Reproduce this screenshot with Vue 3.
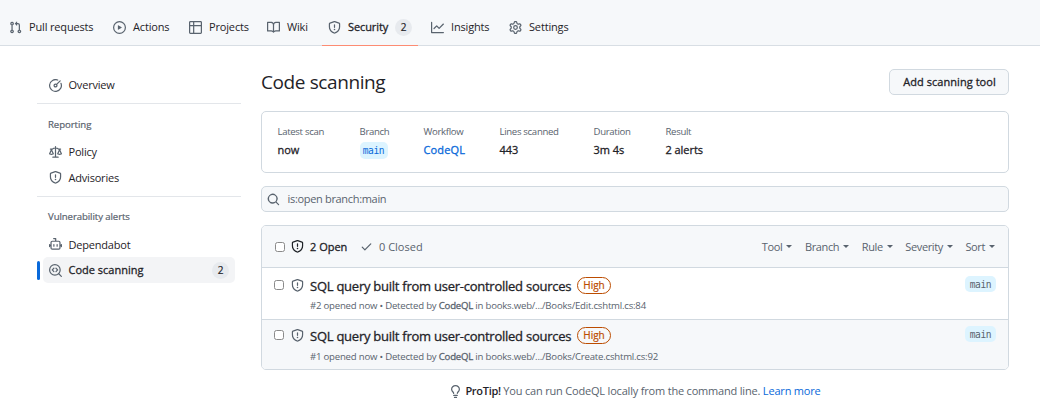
<script setup>
const icons = {
  pr: 'M1.5 3.25a2.25 2.25 0 1 1 3 2.122v5.256a2.251 2.251 0 1 1-1.5 0V5.372A2.25 2.25 0 0 1 1.5 3.25Zm5.677-.177L9.573.677A.25.25 0 0 1 10 .854V2.5h1A2.5 2.5 0 0 1 13.5 5v5.628a2.251 2.251 0 1 1-1.5 0V5a1 1 0 0 0-1-1h-1v1.646a.25.25 0 0 1-.427.177L7.177 3.427a.25.25 0 0 1 0-.354ZM3.75 2.5a.75.75 0 1 0 0 1.5.75.75 0 0 0 0-1.5Zm0 9.5a.75.75 0 1 0 0 1.5.75.75 0 0 0 0-1.5Zm8.25.75a.75.75 0 1 0 1.5 0 .75.75 0 0 0-1.5 0Z',
  play: 'M8 0a8 8 0 1 1 0 16A8 8 0 0 1 8 0ZM1.5 8a6.5 6.5 0 1 0 13 0 6.5 6.5 0 0 0-13 0Zm4.879-2.773 4.264 2.559a.25.25 0 0 1 0 .428l-4.264 2.559A.25.25 0 0 1 6 10.559V5.442a.25.25 0 0 1 .379-.215Z',
  table: 'M0 1.75C0 .784.784 0 1.75 0h12.5C15.216 0 16 .784 16 1.75v12.5A1.75 1.75 0 0 1 14.25 16H1.75A1.75 1.75 0 0 1 0 14.25ZM6.5 6.5v8h7.75a.25.25 0 0 0 .25-.25V6.5Zm8-1.5V1.75a.25.25 0 0 0-.25-.25H6.5V5Zm-13 1.5v7.75c0 .138.112.25.25.25H5v-8ZM5 5V1.5H1.75a.25.25 0 0 0-.25.25V5Z',
  book: 'M0 1.75A.75.75 0 0 1 .75 1h4.253c1.227 0 2.317.59 3 1.501A3.743 3.743 0 0 1 11.006 1h4.245a.75.75 0 0 1 .75.75v10.5a.75.75 0 0 1-.75.75h-4.507a2.25 2.25 0 0 0-1.591.659l-.622.621a.75.75 0 0 1-1.06 0l-.622-.621A2.25 2.25 0 0 0 5.258 13H.75a.75.75 0 0 1-.75-.75Zm7.251 10.324.004-5.073-.002-2.253A2.25 2.25 0 0 0 5.003 2.5H1.5v9h3.757a3.75 3.75 0 0 1 1.994.574ZM8.755 4.75l-.004 7.322a3.752 3.752 0 0 1 1.992-.572H14.5v-9h-3.495a2.25 2.25 0 0 0-2.25 2.25Z',
  shield: 'M7.467.133a1.748 1.748 0 0 1 1.066 0l5.25 1.68A1.75 1.75 0 0 1 15 3.48V7c0 1.566-.32 3.182-1.303 4.682-.983 1.498-2.585 2.813-5.032 3.855a1.697 1.697 0 0 1-1.33 0c-2.447-1.042-4.049-2.357-5.032-3.855C1.32 10.182 1 8.566 1 7V3.48a1.75 1.75 0 0 1 1.217-1.667Zm.61 1.429a.25.25 0 0 0-.153 0l-5.25 1.68a.25.25 0 0 0-.174.238V7c0 1.358.275 2.666 1.057 3.86.784 1.194 2.121 2.34 4.366 3.297a.196.196 0 0 0 .154 0c2.245-.956 3.582-2.104 4.366-3.298C13.225 9.666 13.5 8.36 13.5 7V3.48a.251.251 0 0 0-.174-.237l-5.25-1.68ZM8.75 4.75v3a.75.75 0 0 1-1.5 0v-3a.75.75 0 0 1 1.5 0ZM9 10.5a1 1 0 1 1-2 0 1 1 0 0 1 2 0Z',
  graph: 'M1.5 1.75V13.5h13.75a.75.75 0 0 1 0 1.5H.75a.75.75 0 0 1-.75-.75V1.75a.75.75 0 0 1 1.5 0Zm14.28 2.53-5.25 5.25a.75.75 0 0 1-1.06 0L7 7.06 4.28 9.78a.751.751 0 0 1-1.042-.018.751.751 0 0 1-.018-1.042l3.25-3.25a.75.75 0 0 1 1.06 0L10 7.94l4.72-4.72a.751.751 0 0 1 1.042.018.751.751 0 0 1 .018 1.042Z',
  gear: 'M8 0a8.2 8.2 0 0 1 .701.031C9.444.095 9.99.645 10.16 1.29l.288 1.107c.018.066.079.158.212.224.231.114.454.243.668.386.123.082.233.09.299.071l1.103-.303c.644-.176 1.392.021 1.82.63.27.385.506.792.704 1.218.315.675.111 1.422-.364 1.891l-.814.806c-.049.048-.098.147-.088.294.016.257.016.515 0 .772-.01.147.038.246.088.294l.814.806c.475.469.679 1.216.364 1.891a7.977 7.977 0 0 1-.704 1.217c-.428.61-1.176.807-1.82.63l-1.102-.302c-.067-.019-.177-.011-.3.071a5.909 5.909 0 0 1-.668.386c-.133.066-.194.158-.211.224l-.29 1.106c-.168.646-.715 1.196-1.458 1.26a8.006 8.006 0 0 1-1.402 0c-.743-.064-1.289-.614-1.458-1.26l-.289-1.106c-.018-.066-.079-.158-.212-.224a5.738 5.738 0 0 1-.668-.386c-.123-.082-.233-.09-.299-.071l-1.103.303c-.644.176-1.392-.021-1.82-.63a8.12 8.12 0 0 1-.704-1.218c-.315-.675-.111-1.422.363-1.891l.815-.806c.05-.048.098-.147.088-.294a6.214 6.214 0 0 1 0-.772c.01-.147-.038-.246-.088-.294l-.815-.806C.635 6.045.431 5.298.746 4.623a7.92 7.92 0 0 1 .704-1.217c.428-.61 1.176-.807 1.82-.63l1.102.302c.067.019.177.011.3-.071.214-.143.437-.272.668-.386.133-.066.194-.158.211-.224l.29-1.106C6.009.645 6.556.095 7.299.03 7.53.01 7.764 0 8 0Zm-.571 1.525c-.036.003-.108.036-.137.146l-.289 1.105c-.147.561-.549.967-.998 1.189-.173.086-.34.183-.5.29-.417.278-.97.423-1.529.27l-1.103-.303c-.109-.03-.175.016-.195.045-.22.312-.412.644-.573.99-.014.031-.021.11.059.19l.815.806c.411.406.562.957.53 1.456a4.709 4.709 0 0 0 0 .582c.032.499-.119 1.05-.53 1.456l-.815.806c-.081.08-.073.159-.059.19.162.346.353.677.573.989.02.03.085.076.195.046l1.102-.303c.56-.153 1.113-.008 1.53.27.161.107.328.204.501.29.447.222.85.629.997 1.189l.289 1.105c.029.109.101.143.137.146a6.6 6.6 0 0 0 1.142 0c.036-.003.108-.036.137-.146l.289-1.105c.147-.561.549-.967.998-1.189.173-.086.34-.183.5-.29.417-.278.97-.423 1.529-.27l1.103.303c.109.029.175-.016.195-.045.22-.313.411-.644.573-.99.014-.031.021-.11-.059-.19l-.815-.806c-.411-.406-.562-.957-.53-1.456a4.709 4.709 0 0 0 0-.582c-.032-.499.119-1.05.53-1.456l.815-.806c.081-.08.073-.159.059-.19a6.464 6.464 0 0 0-.573-.989c-.02-.03-.085-.076-.195-.046l-1.102.303c-.56.153-1.113.008-1.53-.27a4.44 4.44 0 0 0-.501-.29c-.447-.222-.85-.629-.997-1.189l-.289-1.105c-.029-.11-.101-.143-.137-.146a6.6 6.6 0 0 0-1.142 0ZM11 8a3 3 0 1 1-6 0 3 3 0 0 1 6 0ZM9.5 8a1.5 1.5 0 1 0-3.001.001A1.5 1.5 0 0 0 9.5 8Z',
  meter: 'M8 1.5a6.5 6.5 0 1 0 6.016 4.035.75.75 0 0 1 1.388-.57 8 8 0 1 1-4.37-4.37.75.75 0 0 1-.569 1.389A6.473 6.473 0 0 0 8 1.5Zm6.28.22a.75.75 0 0 1 0 1.06l-4.063 4.064a2.5 2.5 0 1 1-1.06-1.06L13.22 1.72a.75.75 0 0 1 1.06 0ZM7 8a1 1 0 1 0 2 0 1 1 0 0 0-2 0Z',
  law: 'M8.75.75V2h.985c.304 0 .603.08.867.231l1.29.736c.038.022.08.033.124.033h2.234a.75.75 0 0 1 0 1.5h-.427l2.111 4.692a.75.75 0 0 1-.154.838c-.21.2-.5.4-.748.5C14.556 10.78 13.88 11 13 11a4.498 4.498 0 0 1-2.023-.454 3.544 3.544 0 0 1-.757-.516.75.75 0 0 1-.154-.838L12.178 4.5h-.162c-.305 0-.604-.079-.868-.231l-1.29-.736a.245.245 0 0 0-.124-.033H8.75V13h2.5a.75.75 0 0 1 0 1.5h-6.5a.75.75 0 0 1 0-1.5h2.5V3.5h-.984a.245.245 0 0 0-.124.033l-1.289.737c-.265.15-.564.23-.869.23h-.162l2.112 4.692a.75.75 0 0 1-.154.838c-.21.2-.5.4-.757.516C4.556 10.78 3.88 11 3 11a4.498 4.498 0 0 1-2.023-.454 3.544 3.544 0 0 1-.757-.516.75.75 0 0 1-.154-.838L2.178 4.5H1.75a.75.75 0 0 1 0-1.5h2.234a.249.249 0 0 0 .125-.033l1.288-.737c.265-.15.564-.23.869-.23h.984V.75a.75.75 0 0 1 1.5 0Zm2.945 8.477c.285.135.718.273 1.305.273s1.02-.138 1.305-.273L13 6.327Zm-10 0c.285.135.718.273 1.305.273s1.02-.138 1.305-.273L3 6.327Z',
  search: 'M10.68 11.74a6 6 0 0 1-7.922-8.982 6 6 0 0 1 8.982 7.922l3.04 3.04a.749.749 0 0 1-.326 1.275.749.749 0 0 1-.734-.215ZM11.5 7a4.499 4.499 0 1 0-8.997 0A4.499 4.499 0 0 0 11.5 7Z',
  check: 'M13.78 4.22a.75.75 0 0 1 0 1.06l-7.25 7.25a.75.75 0 0 1-1.06 0L2.22 9.28a.751.751 0 0 1 .018-1.042.751.751 0 0 1 1.042-.018L6 10.94l6.72-6.72a.75.75 0 0 1 1.06 0Z',
  bulb: 'M8 1.5c-2.363 0-4 1.69-4 3.75 0 .984.424 1.625.984 2.304l.214.253c.223.264.47.556.673.848.284.411.537.896.621 1.49a.75.75 0 0 1-1.484.211c-.04-.282-.163-.547-.37-.847a8.456 8.456 0 0 0-.542-.68c-.084-.1-.173-.205-.268-.32C3.201 7.75 2.5 6.766 2.5 5.25 2.5 2.31 4.863 0 8 0s5.5 2.31 5.5 5.25c0 1.516-.701 2.5-1.328 3.259-.095.115-.184.22-.268.319-.207.245-.383.453-.541.681-.208.3-.33.565-.37.847a.751.751 0 0 1-1.485-.212c.084-.593.337-1.078.621-1.489.203-.292.45-.584.673-.848.075-.088.147-.173.213-.253.561-.679.985-1.32.985-2.304 0-2.06-1.637-3.75-4-3.75ZM5.75 12h4.5a.75.75 0 0 1 0 1.5h-4.5a.75.75 0 0 1 0-1.5ZM6 15.25a.75.75 0 0 1 .75-.75h2.5a.75.75 0 0 1 0 1.5h-2.5a.75.75 0 0 1-.75-.75Z'
}
const tabs = [
  { id: 'pulls', icon: 'pr', label: 'Pull requests' },
  { id: 'actions', icon: 'play', label: 'Actions' },
  { id: 'projects', icon: 'table', label: 'Projects' },
  { id: 'wiki', icon: 'book', label: 'Wiki' },
  { id: 'security', icon: 'shield', label: 'Security', count: 2 },
  { id: 'insights', icon: 'graph', label: 'Insights' },
  { id: 'settings', icon: 'gear', label: 'Settings' }
]
const filters = ['Tool', 'Branch', 'Rule', 'Severity', 'Sort']
const alerts = [
  { n: 2, path: 'books.web/.../Books/Edit.cshtml.cs:84' },
  { n: 1, path: 'books.web/.../Books/Create.cshtml.cs:92' }
]
</script>

<template>
  <div class="page">
    <nav class="tabs">
      <a v-for="t in tabs" :key="t.id" class="tab" :class="t.id">
        <svg class="icon" viewBox="0 0 16 16"><path :d="icons[t.icon]" /></svg>
        <span class="label">{{ t.label }}</span>
        <span v-if="t.count" class="count">{{ t.count }}</span>
      </a>
    </nav>

    <div class="body">
      <aside class="side">
        <a class="item"><svg class="icon" viewBox="0 0 16 16"><path :d="icons.meter" /></svg><span>Overview</span></a>
        <hr class="divider first" />
        <h3 class="group">Reporting</h3>
        <a class="item"><svg class="icon" viewBox="0 0 16 16"><path :d="icons.law" /></svg><span>Policy</span></a>
        <a class="item adv"><svg class="icon" viewBox="0 0 16 16"><path :d="icons.shield" /></svg><span>Advisories</span></a>
        <hr class="divider second" />
        <h3 class="group vuln">Vulnerability alerts</h3>
        <a class="item bot">
          <svg class="icon line" viewBox="0 0 16 16">
            <path d="M5.75 .75h2.5V4M4 4h8a1.5 1.5 0 0 1 1.5 1.5v6.75a1.5 1.5 0 0 1-1.5 1.5H4a1.5 1.5 0 0 1-1.5-1.5V5.5A1.5 1.5 0 0 1 4 4ZM.75 8v2.5M15.25 8v2.5M6 8v2M10 8v2M.75 9H2M14 9h1.25" />
          </svg>
          <span>Dependabot</span>
        </a>
        <div class="current">
          <i class="marker"></i>
          <a class="item active">
            <svg class="icon line" viewBox="0 0 16 16">
              <circle cx="7.25" cy="7.25" r="6.5" /><path d="m12 12 3.2 3.2M6 5.2 4 7.25l2 2.05M8.6 5.2l2 2.05-2 2.05" />
            </svg>
            <span>Code scanning</span><span class="count">2</span>
          </a>
        </div>
      </aside>

      <main class="main">
        <header class="head">
          <h1>Code scanning</h1>
          <button class="add"><span>Add scanning tool</span></button>
        </header>

        <section class="summary">
          <dl class="c1"><dt>Latest scan</dt><dd>now</dd></dl>
          <dl class="c2"><dt>Branch</dt><dd><span class="ref">main</span></dd></dl>
          <dl class="c3"><dt>Workflow</dt><dd class="link">CodeQL</dd></dl>
          <dl class="c4"><dt>Lines scanned</dt><dd>443</dd></dl>
          <dl class="c5"><dt>Duration</dt><dd>3m 4s</dd></dl>
          <dl class="c6"><dt>Result</dt><dd>2 alerts</dd></dl>
        </section>

        <div class="search">
          <svg class="icon" viewBox="0 0 16 16"><path :d="icons.search" /></svg>
          <span>is:open branch:main</span>
        </div>

        <section class="list">
          <div class="listhead">
            <i class="box"></i>
            <svg class="icon dark" viewBox="0 0 16 16"><path :d="icons.shield" /></svg>
            <span class="open">2 Open</span>
            <svg class="icon tick" viewBox="0 0 16 16"><path :d="icons.check" /></svg>
            <span class="closed">0 Closed</span>
            <div class="filters">
              <span v-for="f in filters" :key="f" class="filter">{{ f }}<i class="caret"></i></span>
            </div>
          </div>
          <article v-for="a in alerts" :key="a.n" class="row">
            <i class="box"></i>
            <svg class="icon" viewBox="0 0 16 16"><path :d="icons.shield" /></svg>
            <div class="text">
              <div class="title"><span class="name">SQL query built from user-controlled sources</span><span class="high">High</span></div>
              <div class="meta">#{{ a.n }} opened now • Detected by <b>CodeQL</b> in {{ a.path }}</div>
            </div>
            <span class="ref muted">main</span>
          </article>
        </section>

        <footer class="tip">
          <svg class="icon" viewBox="0 0 16 16"><path :d="icons.bulb" /></svg>
          <p><b>ProTip!</b> You can run CodeQL locally from the command line. <a>Learn more</a></p>
        </footer>
      </main>
    </div>
  </div>
</template>

<style>
body { background: #fff; overflow: hidden; }
</style>

<style scoped>
* { box-sizing: border-box; margin: 0; padding: 0; }
.page { width: 1040px; height: 415px; overflow: hidden; font-family: "Open Sans", "Noto Sans", sans-serif; font-size: 11px; line-height: 16px; color: #1f2328; white-space: nowrap; }
.icon { width: 13px; height: 13px; flex: none; fill: #59636e; display: block; }
.icon.dark { fill: #1f2328; }
.icon.line { fill: none; stroke: #59636e; stroke-width: 1.5; stroke-linecap: round; stroke-linejoin: round; }
.tabs { height: 46px; background: #f6f8fa; border-bottom: 1px solid #d8dee4; display: flex; padding: 9px 0 0 9px; }
.tab { display: flex; align-items: center; height: 37px; flex: none; }
.tab .icon { margin-right: 7px; }
.pulls { width: 104px; }
.actions { width: 76px; }
.projects { width: 78px; }
.wiki { width: 55px; }
.security { width: 96px; padding-left: 6px; border-bottom: 1px solid #fd8c73; }
.insights { width: 65px; padding-left: 13px; margin-right: 26px; }
.label { letter-spacing: -0.16px; margin-top: -1px; }
.security .label { width: 40px; letter-spacing: -0.1px; }
.count { background: #e7eaee; border-radius: 9px; width: 17px; height: 17px; line-height: 16px; font-size: 10px; text-align: center; }
.security .count { margin-left: 7px; }
.security .label, .item.active, .add, dd, .open, .name, .meta b { -webkit-text-stroke: 0.3px currentColor; }
.group, .count, .high { -webkit-text-stroke: 0.2px currentColor; }
.body { display: flex; }
.side { width: 204px; margin-left: 37px; padding-top: 26px; }
.item { display: flex; align-items: center; height: 26px; margin: 0 6px; padding-left: 6px; letter-spacing: -0.2px; }
.item .icon { margin-right: 6.5px; }
.divider { border: 0; height: 1px; background: #e3e6ea; }
.first { margin-top: 5px; }
.second { margin-top: 6px; }
.group { font-size: 9.6px; font-weight: 400; letter-spacing: -0.05px; color: #59636e; line-height: 14px; margin: 14px 0 7px 11px; }
.adv { height: 25px; }
.vuln { margin: 13px 0 8px 11px; letter-spacing: -0.08px; }
.bot { height: 25px; }
.current { display: flex; align-items: center; }
.marker { width: 3px; height: 19px; border-radius: 3px; background: #0969da; margin-right: 3px; }
.item.active { flex: 1; margin: 0 6px 0 0; padding-right: 6px; background: #f3f4f6; border-radius: 5px; letter-spacing: 0; }
.item.active .count { margin-left: auto; }
.main { margin-left: 20px; width: 748px; }
.head { display: flex; justify-content: space-between; align-items: center; margin-top: 23px; height: 26px; }
h1 { font-size: 19px; font-weight: 400; line-height: 26px; letter-spacing: -0.4px; }
.add { width: 120px; height: 26px; padding-left: 1px; border: 1px solid #d1d9e0; border-radius: 5px; background: #f6f8fa; font: 400 11px/16px "Open Sans", sans-serif; letter-spacing: 0.05px; color: #1f2328; }
.summary { margin-top: 16px; height: 62px; border: 1px solid #d1d9e0; border-radius: 5px; display: flex; padding: 13px 0 0 15.5px; }
dt { font-size: 9.6px; line-height: 14px; letter-spacing: -0.32px; color: #59636e; }
dd { line-height: 16px; margin-top: 3px; letter-spacing: -0.05px; }
.c1 { width: 82px; } .c2 { width: 64px; } .c3 { width: 76px; } .c4 { width: 94px; } .c5 { width: 72px; }
.link { color: #0969da; letter-spacing: 0.15px; }
.ref { display: block; width: 28px; height: 17px; border-radius: 5px; background: #ddf4ff; color: #0969da; font: 9.6px/17px "DejaVu Sans Mono", monospace; text-align: center; letter-spacing: -0.4px; -webkit-text-stroke: 0; }
.ref.muted { width: 31px; height: 16px; line-height: 17px; color: #59636e; margin: -4px 0 0 auto; }
.search { margin-top: 13px; height: 26px; border: 1px solid #d1d9e0; border-radius: 5px; background: #f6f8fa; display: flex; align-items: center; padding-left: 5px; color: #59636e; letter-spacing: -0.32px; }
.search .icon { margin-right: 7.5px; }
.list { margin-top: 13px; border: 1px solid #d1d9e0; border-radius: 5px; overflow: hidden; height: 145px; }
.listhead { height: 41px; background: #f6f8fa; display: flex; align-items: center; padding-left: 13px; }
.box { width: 10px; height: 10px; border: 1px solid #8a8a8a; border-radius: 2.5px; background: #fff; flex: none; }
.listhead .box { margin-right: 6px; }
.listhead .dark { margin-right: 6px; }
.open { width: 50px; }
.tick { margin-right: 6px; }
.closed { color: #59636e; }
.filters { margin-left: auto; display: flex; gap: 12.6px; padding-right: 13px; color: #59636e; letter-spacing: -0.38px; }
.filter { display: flex; align-items: center; gap: 4px; }
.caret { border: 3px solid transparent; border-top-color: #59636e; border-bottom: 0; }
.row { display: flex; align-items: flex-start; border-top: 1px solid #d1d9e0; height: 52px; padding: 12px 12px 0 12px; }
.row + .row { background: #f6f8fa; height: 51px; padding-top: 10px; }
.row .box { margin: 0 7px 0 0; }
.row .icon { margin: -1px 6px 0 0; }
.title { display: flex; align-items: center; height: 17px; font-size: 13px; margin-top: -3px; }
.name { width: 261px; letter-spacing: -0.25px; }
.high { margin-left: 6px; width: 34px; height: 17px; border: 1px solid #bc4c00; border-radius: 9px; color: #bc4c00; font-size: 10px; line-height: 15px; text-align: center; }
.meta { font-size: 9.6px; line-height: 14px; margin-top: 5px; letter-spacing: -0.21px; color: #59636e; }
.row + .row .meta { margin-top: 6px; }
.meta b { font-weight: 400; }
.tip { display: flex; align-items: center; justify-content: center; margin-top: 13px; color: #59636e; letter-spacing: -0.19px; }
.tip b { font-weight: 600; color: #1f2328; letter-spacing: -0.3px; }
.tip a { color: #0969da; }
.tip .icon { margin-right: 3px; }
</style>
